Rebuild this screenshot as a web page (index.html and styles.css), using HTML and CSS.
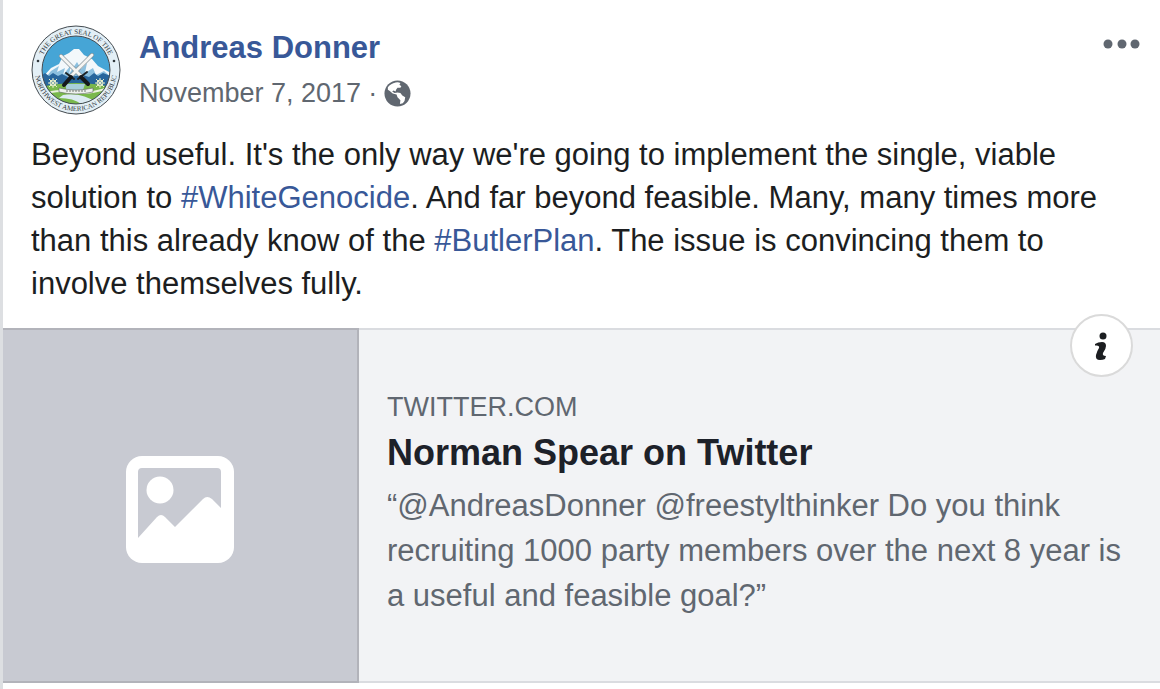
FILE: index.html
```html
<!DOCTYPE html>
<html lang="en">
<head>
  <meta charset="UTF-8" />
  <meta name="viewport" content="width=device-width, initial-scale=1.0"/>
  <title>Andreas Donner</title>
  <link rel="stylesheet" href="styles.css">
</head>
<body>

  <article class="post">
    <header class="post-header">
      <a class="avatar" href="#" aria-label="Andreas Donner">
        <svg viewBox="0 0 90 90" width="90" height="90">
          <defs>
            <clipPath id="scene"><circle cx="45" cy="45" r="34"/></clipPath>
            <path id="ringTop" d="M9 45 A36 36 0 0 1 81 45"/>
            <path id="ringBottom" d="M4.600 38 A41 41 0 1 0 85.400 38"/>
          </defs>
          <circle cx="45" cy="45" r="44" fill="#e3eff6" stroke="#444b50" stroke-width="1"/>
          <g clip-path="url(#scene)">
            <rect width="90" height="90" fill="#46a5d6"/>
            <path d="M10 54 L20 43 L28 39 L32 31 L38 28 L43 24 L48 24 L53 30 L61 34 L67 41 L80 48 V60 H10 Z" fill="#f3f8fb"/>
            <path d="M20 46 L28 41 L26 47 L34 43 L32 50 L40 40 L38 49 L46 37 L50 44 L56 38 L54 48 L62 43 L65 50 L73 46 L80 52 V56 H12 Z" fill="#8cc0df"/>
            <path d="M10 51 L14 48 L18 51 L22 48 L27 51 L31 49 L37 52 L45 51 L52 50 L58 52 L63 48 L67 51 L72 48 L80 51 V64 H10 Z" fill="#28669c"/>
            <path d="M10 62 Q45 54 80 62 V82 H10 Z" fill="#79b84c"/>
            <path d="M35 59 H54 L52 65 H35 Z" fill="#a9cfdb"/>
            <path d="M32 70 Q51 67 66 78 L54 83 Q47 73 28 73 Z" fill="#dcebf2"/>
            <path d="M14 68 Q36 64 45 67 T78 63" fill="none" stroke="#e9f2dc" stroke-width="2"/>
            <path d="M28 63 Q45 67 62 63 V67 Q45 71 28 67 Z" fill="#eef1ee" stroke="#59625c" stroke-width=".6"/>
            <path d="M35 66 H55" stroke="#727873" stroke-width="1" stroke-dasharray="2 1"/>
            <g fill="none" stroke="#e5edc8" stroke-width="1">
              <path d="M22 53V63M17 58H27M18 54L26 62M26 54L18 62M69 53V63M64 58H74M65 54L73 62M73 54L65 62"/>
              <circle cx="22" cy="58" r="3"/><circle cx="69" cy="58" r="3"/>
            </g>
          </g>
          <g stroke-linecap="round">
            <path d="M30 31 L51 52 M61 30 L39 52" stroke="#7b8990" stroke-width="4"/>
            <path d="M30 31 L51 52 M61 30 L39 52" stroke="#f5f5f3" stroke-width="3"/>
            <path d="M35 48 L43 54 M47 54 L56 47" stroke="#1c2226" stroke-width="2"/>
            <path d="M40 52 L33 60 M50 52 L57 59" stroke="#15191c" stroke-width="4"/>
          </g>
          <circle cx="45" cy="45" r="34" fill="none" stroke="#454c52" stroke-width="1"/>
          <text class="seal-text"><textPath href="#ringTop" startOffset="50%" text-anchor="middle">THE GREAT SEAL OF THE</textPath></text>
          <text class="seal-text"><textPath href="#ringBottom" startOffset="50%" text-anchor="middle">NORTHWEST AMERICAN REPUBLIC</textPath></text>
          <circle cx="7" cy="36" r="1.300" fill="#30373c"/>
          <circle cx="83" cy="36" r="1.300" fill="#30373c"/>
        </svg>
      </a>

      <div class="byline">
        <a class="author" href="#">Andreas Donner</a>
        <div class="meta">
          <a class="date" href="#">November 7, 2017</a>
          <span class="dot">·</span>
          <svg class="globe" viewBox="0 0 28 28" width="27" height="27" role="img" aria-label="Public">
            <circle cx="14" cy="14" r="13.500" fill="#606770"/>
            <path d="M4 7.500 Q7 3.500 12 2.500 Q15 2 17 3 L16 5 L18 6.500 L17 8 L14 8 L12.500 10 L12 12 L10 11 L8.500 12 L11 13.500 Q14 12.500 17 13.500 L19 16 L22 18 Q22 22 19.500 24 L16.500 25 L17 21 L14 18 L13 15 L9 14 L6 11.500 L4 10 Z" fill="#fff"/>
          </svg>
        </div>
      </div>

      <button class="more-btn" type="button" aria-label="More options">
        <svg viewBox="0 0 38 10" width="38" height="10" fill="#606770">
          <circle cx="5" cy="5" r="4.500"/>
          <circle cx="19" cy="5" r="4.500"/>
          <circle cx="32" cy="5" r="4.500"/>
        </svg>
      </button>
    </header>

    <p class="post-text">Beyond useful. It's the only way we're going to implement the single, viable solution to <a href="#">#WhiteGenocide</a>. And far beyond feasible. Many, many times more than this already know of the <a href="#">#ButlerPlan</a>. The issue is convincing them to involve themselves fully.</p>

    <section class="attachment">
      <div class="thumb">
        <svg viewBox="0 0 108 108" width="108" height="108">
          <rect width="108" height="107" rx="16" fill="#fff"/>
          <path d="M12 82 V16 Q12 12 16 12 H91 Q95 12 95 16 V52 L86 43 Q81 39 77 43 L49 71 L39 61 Q35 57 31 61 Z" fill="#c8cad2"/>
          <circle cx="34" cy="34" r="13.500" fill="#fff"/>
        </svg>
      </div>
      <div class="link-info">
        <div class="domain">TWITTER.COM</div>
        <a class="link-title" href="#">Norman Spear on Twitter</a>
        <p class="link-desc">“@AndreasDonner @freestylthinker Do you think recruiting 1000 party members over the next 8 year is a useful and feasible goal?”</p>
      </div>
      <button class="info-btn" type="button" aria-label="Show more information about this link">
        <svg viewBox="0 0 16 30" width="16" height="30" fill="#1c1e21">
          <circle cx="9" cy="5" r="3.500"/>
          <path d="M1 13 Q4 11 8 11 Q12 11 12 15 Q12 18 9 22 Q8 25 12 25 L11 28 Q9 29 6 29 Q1 29 2 24 Q3 20 5 17 Q6 14 1 14.500 Z"/>
        </svg>
      </button>
    </section>
  </article>

</body>
</html>
```

FILE: styles.css
```css
* {
  box-sizing: border-box;
}

body {
  margin: 0;
  font-family: "Liberation Sans", Arial, sans-serif;
  background: #fff;
  color: #1c1e21;
}

a {
  color: #385898;
  text-decoration: none;
}

a:hover {
  text-decoration: underline;
}

button {
  padding: 0;
  border: none;
  background: none;
  cursor: pointer;
}

svg {
  display: block;
}

.post {
  min-height: 100vh;
  border-left: 3px solid #dddfe2;
}

.post-header {
  display: flex;
  align-items: flex-start;
  padding: 25px 19px 0 28px;
}

.avatar {
  border-radius: 50%;
}

.seal-text {
  font-family: "Liberation Serif", serif;
  font-size: 7px;
  fill: #30373c;
}

.byline {
  flex: 1;
  padding: 4px 0 0 18px;
}

.author {
  display: block;
  font-size: 31px;
  line-height: 38px;
  font-weight: bold;
}

.meta {
  display: flex;
  align-items: center;
  gap: 7px;
  margin-top: 8px;
  font-size: 27px;
  line-height: 36px;
  color: #606770;
}

.date {
  color: #606770;
}

.more-btn {
  margin-top: 14px;
}

.post-text {
  margin: 0;
  padding: 18px 28px 23px;
  font-size: 31px;
  line-height: 43px;
}

.attachment {
  position: relative;
  display: flex;
  background: #f2f3f5;
  border-top: 2px solid #dadce0;
  border-bottom: 2px solid #dadce0;
}

.thumb {
  display: flex;
  flex: none;
  align-items: center;
  justify-content: center;
  width: 356px;
  margin: -2px 0;
  padding-top: 8px;
  background: #c8cad2;
  border: 2px solid #b2b3ba;
  border-left: none;
}

.link-info {
  flex: 1;
  padding: 61px 20px 63px 28px;
  color: #606770;
}

.domain {
  font-size: 27px;
  line-height: 32px;
}

.link-title {
  display: block;
  margin: 8px 0;
  font-size: 36px;
  line-height: 44px;
  font-weight: bold;
  color: #1d2129;
}

.link-desc {
  margin: 0;
  font-size: 31px;
  line-height: 45px;
}

/* sits over the top edge of the attachment */
.info-btn {
  position: absolute;
  top: -16px;
  right: 27px;
  display: flex;
  align-items: center;
  justify-content: center;
  width: 63px;
  height: 63px;
  background: #fff;
  border: 2px solid #dadada;
  border-radius: 50%;
}
```
